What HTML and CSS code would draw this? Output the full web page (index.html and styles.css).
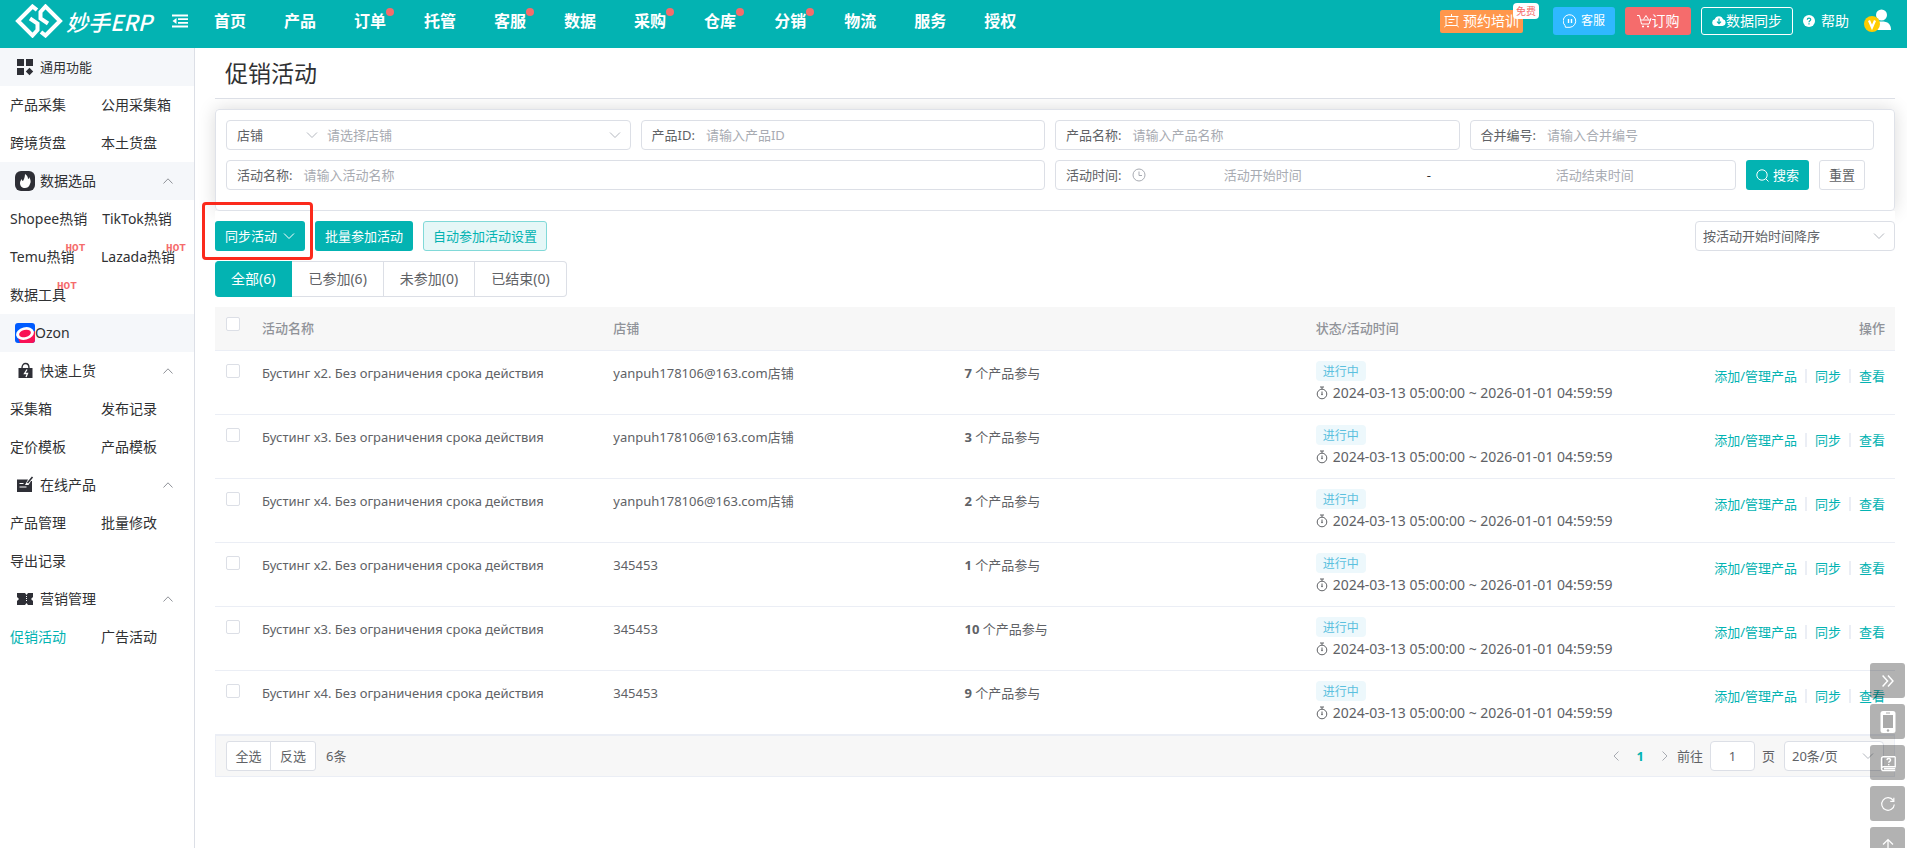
FILE: index.html
```html
<!DOCTYPE html>
<html lang="zh-CN">
<head>
<meta charset="utf-8">
<title>促销活动 - 妙手ERP</title>
<meta name="viewport" content="width=device-width, initial-scale=1">
<link rel="stylesheet" href="styles.css">
</head>
<body>
<svg class="defs" aria-hidden="true">
  <symbol id="down" viewBox="0 0 12 12"><path d="M1 3.500 6 8.500 11 3.500" fill="none" stroke="currentColor"/></symbol>
  <symbol id="up" viewBox="0 0 12 12"><path d="M1.500 8.500 6 3.800 10.500 8.500" fill="none" stroke="currentColor"/></symbol>
  <symbol id="timer" viewBox="0 0 12 14"><circle cx="6" cy="8" r="4.800" fill="none" stroke="currentColor"/><path d="M4 1h4M6 1v2M6 5.500v3" fill="none" stroke="currentColor"/><circle cx="6" cy="8.500" r=".8" fill="currentColor"/></symbol>
</svg>

<header class="topbar">
  <a class="brand" href="#">
    <svg class="brand-mark" viewBox="0 0 48 34" aria-hidden="true"><g fill="none" stroke="#fff" stroke-width="4"><path d="M22 6 17.500 2.500 3 17 17.500 31.500 22.500 26V19.500L15 14.500"/><path d="M26 28 30.500 31.500 45 17 30.500 2.500 25.500 8V14.500L33 19.500"/></g></svg>
    <span class="brand-name">妙手ERP</span>
  </a>
  <button class="fold" aria-label="收起菜单"><svg width="16" height="14" viewBox="0 0 16 14"><path d="M0 1.500h16M6 5.200h10M6 8.800h10M0 12.500h16" stroke="#fff" stroke-width="1.800"/><path d="M4.500 4v6L0.500 7z" fill="#fff"/></svg></button>
  <nav class="mainnav">
    <a href="#">首页</a><a href="#">产品</a><a class="dot" href="#">订单</a><a href="#">托管</a><a class="dot" href="#">客服</a><a href="#">数据</a><a class="dot" href="#">采购</a><a class="dot" href="#">仓库</a><a class="dot" href="#">分销</a><a href="#">物流</a><a href="#">服务</a><a href="#">授权</a>
  </nav>
  <div class="tools">
    <a class="train" href="#"><svg width="15" height="14" viewBox="0 0 15 14" fill="none" stroke="#fff"><path d="M.5 2.500h14M2 2.500v9.500M13 2.500v9.500M7.500 0v2.500M0 13.500l2-2h11l2 2M4.500 5.500h6M4.500 8.500h4"/></svg>预约培训<span class="free">免费</span></a>
    <button class="tool service"><svg width="14" height="14" viewBox="0 0 14 14" fill="none" stroke="#fff"><path d="M2 11.500A6.300 6.300 0 1 1 7 13.300H2.500z"/><path d="M5.500 5v4M8.500 5v4" stroke-width="1.400"/></svg><span>客服</span></button>
    <button class="tool order"><svg width="15" height="14" viewBox="0 0 15 14" fill="none" stroke="#fff"><path d="M0 1.500h2.500l2 8.500h7.500l2-6M4 6h10M6.500 5.500l2.500-4 2.500 4"/><path d="M5 12.500h2M10 12.500h2" stroke-width="1.600"/></svg>订购</button>
    <button class="tool sync"><svg width="14" height="12" viewBox="0 0 14 12"><path d="M3.500 11a3.400 3.400 0 0 1-.7-6.700A4.300 4.300 0 0 1 11 4.300 3.400 3.400 0 0 1 10.500 11z" fill="#fff"/><path d="M7 3.500v5M5 6.700l2 2 2-2" fill="none" stroke="#03b3b2" stroke-width="1.200"/></svg>数据同步</button>
    <a class="help" href="#"><svg width="12" height="12" viewBox="0 0 12 12"><circle cx="6" cy="6" r="6" fill="#fff"/><path d="M4.300 4.800C4.300 2.500 7.800 2.600 7.700 4.600 7.600 5.900 6 5.800 6 7.300M6 8.300v1.200" fill="none" stroke="#03b3b2" stroke-width="1.200"/></svg>帮助</a>
    <button class="avatar" aria-label="账户"><svg width="28" height="24" viewBox="0 0 28 24"><circle cx="17.500" cy="6" r="5.500" fill="#fff"/><path d="M8 21c0-6 3-8.500 9.500-8.500S27 15 27 21z" fill="#fff"/><circle cx="8" cy="15" r="8" fill="#fc0"/><path d="M5 11.500l3 7 3-7" fill="none" stroke="#fff" stroke-width="2.200"/></svg></button>
  </div>
</header>

<div class="layout">
  <aside class="sidebar">
    <h2 class="group shaded small"><svg width="20" height="20" viewBox="0 0 20 20" fill="#2e2f36"><path d="M2 2h7v7H2zM11 2h7v7h-7zM2 11h7v7H2zM14.500 10.800l3.700 3.700-3.700 3.700-3.700-3.700z"/></svg><span>通用功能</span></h2>
    <ul><li><a href="#">产品采集</a></li><li><a href="#">公用采集箱</a></li><li><a href="#">跨境货盘</a></li><li><a href="#">本土货盘</a></li></ul>
    <h2 class="group shaded"><svg width="20" height="20" viewBox="0 0 20 20"><rect width="20" height="20" rx="6" fill="#2e2f36"/><path d="M10 3c3 2 3 4 3 5 1 0 1-1 1-2 2 3 2 5 1 7-1 3-3 4-5 4-3 0-5-2-5-5 0-2 1-3 2-4 0 1 0 2 1 2 1-2 2-4 2-7z" fill="#fff"/></svg><span>数据选品</span><svg class="caret"><use href="#up"/></svg></h2>
    <ul><li><a href="#">Shopee热销</a></li><li><a href="#">TikTok热销</a></li><li><a href="#">Temu热销<b class="hot">HOT</b></a></li><li><a href="#">Lazada热销<b class="hot">HOT</b></a></li><li><a href="#">数据工具<b class="hot">HOT</b></a></li></ul>
    <h2 class="group shaded flush"><svg width="20" height="20" viewBox="0 0 20 20"><rect width="20" height="20" rx="3" fill="#005bff"/><path d="M20 8v9a3 3 0 0 1-3 3H5l-2-5z" fill="#f91155"/><ellipse cx="10" cy="10.500" rx="9" ry="6.200" transform="rotate(-14 10 10.500)" fill="#fff"/><ellipse cx="10" cy="10.500" rx="6" ry="3.600" transform="rotate(-14 10 10.500)" fill="#f91155"/></svg><span>Ozon</span></h2>
    <h2 class="group"><svg width="20" height="20" viewBox="0 0 20 20"><path d="M3.500 7h14v10h-14z" fill="#2e2f36"/><path d="M7 7c0-6 7-6 7 0" fill="none" stroke="#2e2f36" stroke-width="1.400"/><path d="M12 8.500 9.500 12.500h3L11 16" fill="none" stroke="#fff" stroke-width="1.300"/></svg><span>快速上货</span><svg class="caret"><use href="#up"/></svg></h2>
    <ul><li><a href="#">采集箱</a></li><li><a href="#">发布记录</a></li><li><a href="#">定价模板</a></li><li><a href="#">产品模板</a></li></ul>
    <h2 class="group"><svg width="20" height="20" viewBox="0 0 20 20"><path d="M2 4.500h11L10 10h3.500l2.500-4h1v11H2z" fill="#2e2f36"/><path d="M4.500 8.500h4M4.500 12h7" stroke="#fff"/><path d="M17.500 2l-5 6" stroke="#2e2f36" stroke-width="1.600"/></svg><span>在线产品</span><svg class="caret"><use href="#up"/></svg></h2>
    <ul><li><a href="#">产品管理</a></li><li><a href="#">批量修改</a></li><li><a href="#">导出记录</a></li></ul>
    <h2 class="group"><svg width="20" height="20" viewBox="0 0 20 20"><path d="M2 4h8l1.500 2L13 4h5v4l-2 2 2 2v4h-5l-1.500-2L10 16H2v-4l2-2-2-2z" fill="#2e2f36"/><path d="M11.500 7v6" stroke="#fff" stroke-dasharray="1 1"/></svg><span>营销管理</span><svg class="caret"><use href="#up"/></svg></h2>
    <ul><li><a class="active" href="#">促销活动</a></li><li><a href="#">广告活动</a></li></ul>
  </aside>

  <main class="content">
    <h1>促销活动</h1>

    <form class="filters">
      <div class="field"><span class="pick kind"><select aria-label="筛选类型"><option>店铺</option></select><svg><use href="#down"/></svg></span><span class="pick grow"><select class="empty" aria-label="店铺"><option>请选择店铺</option></select><svg><use href="#down"/></svg></span></div>
      <label class="field">产品ID:<input type="text" placeholder="请输入产品ID"></label>
      <label class="field">产品名称:<input type="text" placeholder="请输入产品名称"></label>
      <label class="field">合并编号:<input type="text" placeholder="请输入合并编号"></label>
      <label class="field wide">活动名称:<input type="text" placeholder="请输入活动名称"></label>
      <div class="when">
        <div class="field range"><label for="from">活动时间:</label><svg class="clock" viewBox="0 0 14 14"><circle cx="7" cy="7" r="6" fill="none" stroke="currentColor"/><path d="M7 3.500v4h3" fill="none" stroke="currentColor"/></svg><input id="from" type="text" placeholder="活动开始时间"><span class="dash">-</span><input type="text" aria-label="活动结束时间" placeholder="活动结束时间"></div>
        <button class="btn primary" type="button"><svg width="13" height="13" viewBox="0 0 13 13" fill="none" stroke="#fff"><circle cx="6" cy="6" r="5.200"/><path d="M9.800 9.800l2.700 2.700"/></svg>搜索</button>
        <button class="btn plain" type="reset">重置</button>
      </div>
    </form>

    <div class="toolbar">
      <span class="marked"><button class="btn primary">同步活动<svg width="12" height="12"><use href="#down"/></svg></button></span>
      <button class="btn primary">批量参加活动</button>
      <button class="btn soft">自动参加活动设置</button>
      <span class="pick sort"><select aria-label="排序"><option>按活动开始时间降序</option></select><svg><use href="#down"/></svg></span>
    </div>

    <div class="tabs">
      <button class="on">全部(6)</button><button>已参加(6)</button><button>未参加(0)</button><button>已结束(0)</button>
    </div>

    <table class="list">
      <colgroup><col class="c-check"><col><col><col><col><col class="c-act"></colgroup>
      <thead><tr><th><input type="checkbox" aria-label="全选"></th><th>活动名称</th><th>店铺</th><th></th><th>状态/活动时间</th><th class="right">操作</th></tr></thead>
      <tbody>
        <tr><td><input type="checkbox" aria-label="选择"></td><td>Бустинг x2. Без ограничения срока действия</td><td>yanpuh178106@163.com店铺</td><td><b>7</b> 个产品参与</td><td class="state"><span class="tag">进行中</span><div><svg><use href="#timer"/></svg>2024-03-13 05:00:00 ~ 2026-01-01 04:59:59</div></td><td class="acts"><a href="#">添加/管理产品</a><a href="#">同步</a><a href="#">查看</a></td></tr>
        <tr><td><input type="checkbox" aria-label="选择"></td><td>Бустинг x3. Без ограничения срока действия</td><td>yanpuh178106@163.com店铺</td><td><b>3</b> 个产品参与</td><td class="state"><span class="tag">进行中</span><div><svg><use href="#timer"/></svg>2024-03-13 05:00:00 ~ 2026-01-01 04:59:59</div></td><td class="acts"><a href="#">添加/管理产品</a><a href="#">同步</a><a href="#">查看</a></td></tr>
        <tr><td><input type="checkbox" aria-label="选择"></td><td>Бустинг x4. Без ограничения срока действия</td><td>yanpuh178106@163.com店铺</td><td><b>2</b> 个产品参与</td><td class="state"><span class="tag">进行中</span><div><svg><use href="#timer"/></svg>2024-03-13 05:00:00 ~ 2026-01-01 04:59:59</div></td><td class="acts"><a href="#">添加/管理产品</a><a href="#">同步</a><a href="#">查看</a></td></tr>
        <tr><td><input type="checkbox" aria-label="选择"></td><td>Бустинг x2. Без ограничения срока действия</td><td>345453</td><td><b>1</b> 个产品参与</td><td class="state"><span class="tag">进行中</span><div><svg><use href="#timer"/></svg>2024-03-13 05:00:00 ~ 2026-01-01 04:59:59</div></td><td class="acts"><a href="#">添加/管理产品</a><a href="#">同步</a><a href="#">查看</a></td></tr>
        <tr><td><input type="checkbox" aria-label="选择"></td><td>Бустинг x3. Без ограничения срока действия</td><td>345453</td><td><b>10</b> 个产品参与</td><td class="state"><span class="tag">进行中</span><div><svg><use href="#timer"/></svg>2024-03-13 05:00:00 ~ 2026-01-01 04:59:59</div></td><td class="acts"><a href="#">添加/管理产品</a><a href="#">同步</a><a href="#">查看</a></td></tr>
        <tr><td><input type="checkbox" aria-label="选择"></td><td>Бустинг x4. Без ограничения срока действия</td><td>345453</td><td><b>9</b> 个产品参与</td><td class="state"><span class="tag">进行中</span><div><svg><use href="#timer"/></svg>2024-03-13 05:00:00 ~ 2026-01-01 04:59:59</div></td><td class="acts"><a href="#">添加/管理产品</a><a href="#">同步</a><a href="#">查看</a></td></tr>
      </tbody>
    </table>

    <footer class="pager">
      <div class="pair"><button>全选</button><button>反选</button></div>
      <span class="total">6条</span>
      <button class="step" aria-label="上一页"><svg width="8" height="12" viewBox="0 0 8 12"><path d="M6.500 1.500 2 6l4.500 4.500" fill="none" stroke="currentColor"/></svg></button>
      <b class="page">1</b>
      <button class="step" aria-label="下一页"><svg width="8" height="12" viewBox="0 0 8 12"><path d="M1.500 1.500 6 6l-4.500 4.500" fill="none" stroke="currentColor"/></svg></button>
      <label class="jump">前往<input type="text" value="1">页</label>
      <span class="pick size"><select aria-label="每页条数"><option>20条/页</option></select><svg><use href="#down"/></svg></span>
    </footer>
  </main>
</div>

<div class="dock">
  <button aria-label="收起"><svg viewBox="0 0 20 20"><path d="M4 4l5.500 6L4 16M10 4l5.500 6-5.500 6" fill="none" stroke="#fff" stroke-width="1.600"/></svg></button>
  <button aria-label="手机版"><svg class="tall" viewBox="0 0 16 22"><rect x=".5" width="15" height="22" rx="2.500" fill="#fff"/><path d="M3 4h10v13H3z" fill="#aaa"/><circle cx="8" cy="19.500" r="1.200" fill="#aaa"/><path d="M6 2h4" stroke="#aaa"/></svg></button>
  <button aria-label="帮助手册"><svg viewBox="0 0 20 20" fill="none" stroke="#fff" stroke-width="1.500"><path d="M18 3H5a2.200 2.200 0 0 0-2.200 2.200V16A2.200 2.200 0 0 0 5 18.500h13M3 16a2 2 0 0 1 2-1.800h13V3M5.500 16.400H18"/><path d="M8.800 6.800c.2-2.600 4.400-2.200 4 .2-.3 1.300-2 1.300-2 2.800M10.800 11v1.600"/></svg></button>
  <button aria-label="刷新"><svg viewBox="0 0 20 20" fill="none" stroke="#fff" stroke-width="1.300"><path d="M15.800 6A7 7 0 1 0 17 10.500M16.500 3v4h-4"/></svg></button>
  <button aria-label="回到顶部"><svg viewBox="0 0 20 20" fill="none" stroke="#fff" stroke-width="1.400"><path d="M10 18V4M4.500 9.500 10 4l5.500 5.500"/></svg></button>
</div>
</body>
</html>
```
FILE: styles.css
```css
* { box-sizing: border-box; }
body {
  margin: 0;
  min-height: 100vh;
  display: flex;
  flex-direction: column;
  font: 13px/20px "Noto Sans", "Noto Sans CJK SC", sans-serif;
  color: #606266;
  background: #fff;
}
button, input, select { font: inherit; color: inherit; margin: 0; }
button { padding: 0; border: 0; background: none; cursor: pointer; white-space: nowrap; }
a { color: inherit; text-decoration: none; }
ul { margin: 0; padding: 0; list-style: none; }
svg { display: block; flex: none; }
.defs { position: absolute; width: 0; height: 0; }

/* top bar */
.topbar {
  display: flex;
  align-items: center;
  height: 48px;
  padding: 0 15px 6px 15px;
  background: #03b3b2;
  color: #fff;
}
.brand { display: flex; align-items: center; gap: 3px; width: 157px; }
.brand-mark { width: 48px; height: 34px; }
.brand-name { font: italic 500 22px/34px "Noto Sans CJK SC", sans-serif; white-space: nowrap; }
.mainnav { display: flex; gap: 38px; margin-left: 26px; font-size: 16px; font-weight: 700; white-space: nowrap; }
.mainnav a { position: relative; }
.dot::after {
  content: "";
  position: absolute;
  top: -3px;
  left: 100%;
  width: 8px;
  height: 8px;
  border-radius: 50%;
  background: #f56c6c;
}
.tools { display: flex; align-items: center; gap: 10px; margin-left: auto; font-size: 14px; white-space: nowrap; }
.train {
  position: relative;
  display: flex;
  align-items: center;
  gap: 4px;
  height: 23px;
  margin-right: 20px;
  padding: 0 4px;
  border-radius: 2px;
  background: #ff974c;
}
.free {
  position: absolute;
  top: -7px;
  right: -16px;
  padding: 0 3px;
  border-radius: 4px;
  background: #fff;
  color: #f56c6c;
  font-size: 10px;
  line-height: 16px;
}
.tool { display: flex; align-items: center; justify-content: center; height: 28px; border-radius: 3px; }
.service { gap: 4px; width: 62px; background: #2fb8ff; font-size: 12px; }
.order { width: 66px; background: #f56c6c; }
.sync { width: 92px; border: 1px solid #fff; }
.help { display: flex; align-items: center; gap: 6px; }
.avatar { margin-left: 5px; }

/* sidebar */
.layout { display: flex; flex: 1; }
.sidebar { flex: none; width: 195px; border-right: 1px solid #dcdfe6; color: #303133; font-size: 14px; }
.group { display: flex; align-items: center; gap: 5px; height: 38px; margin: 0; padding: 0 20px 0 15px; font-size: 14px; font-weight: 400; }
.small { font-size: 13px; }
.flush { gap: 0; }
.shaded { background: #f5f7fa; }
.caret { width: 12px; height: 12px; margin-left: auto; color: #909399; }
.sidebar ul { display: flex; flex-wrap: wrap; padding-left: 10px; }
.sidebar li { min-width: 91px; line-height: 38px; white-space: nowrap; }
.sidebar li:nth-child(odd) { padding-right: 15px; }
.sidebar li a { position: relative; display: inline-block; }
.active { color: #03b3b2; }
.hot {
  position: absolute;
  top: 4px;
  left: calc(100% - 9px);
  color: #f56c6c;
  font: 700 11px/12px "Liberation Mono", monospace;
}

/* content */
.content { flex: 1; min-width: 0; padding: 0 12px 0 20px; }
h1 {
  position: relative;
  z-index: 1;
  margin: 0;
  padding: 8px 10px;
  border-bottom: 1px solid #dcdfe6;
  background: #fff;
  color: #303133;
  font-size: 23px;
  font-weight: 400;
  line-height: 34px;
}
.filters {
  display: grid;
  grid-template-columns: repeat(4, 1fr);
  gap: 10px;
  margin-top: 10px;
  padding: 10px 20px 20px 10px;
  border: 1px solid #dfe2e9;
  border-radius: 4px;
  box-shadow: 0 0 18px rgba(0, 0, 0, .15);
}
.field {
  display: flex;
  align-items: center;
  min-width: 0;
  height: 30px;
  padding-left: 10px;
  border: 1px solid #dcdfe6;
  border-radius: 4px;
  white-space: nowrap;
}
.field input { flex: 1; min-width: 0; height: 28px; padding: 0 11px; border: 0; outline: 0; background: none; }
::placeholder { color: #a8abb2; opacity: 1; }
.wide, .when { grid-column: span 2; }
.when { display: flex; gap: 10px; padding-right: 9px; }
.range { flex: 1; padding-right: 24px; }
.range input { flex: 7 1 0; padding: 0; text-align: center; }
.clock { width: 14px; height: 14px; margin-left: 11px; color: #a8abb2; }
.dash { flex: 3 1 0; color: #303133; text-align: center; }

.pick { position: relative; display: flex; align-items: center; }
.pick select { width: 100%; height: 28px; padding: 0; border: 0; outline: 0; background: none; appearance: none; }
.pick svg { position: absolute; right: 9px; width: 12px; height: 12px; color: #b4b8bf; pointer-events: none; }
.pick .empty { color: #a8abb2; }
.kind { width: 90px; }
.grow { flex: 1; }

.btn { display: flex; align-items: center; gap: 4px; height: 30px; padding: 0 9px; border: 1px solid transparent; border-radius: 3px; }
.primary { background: #03b3b2; color: #fff; }
.plain { border-color: #dcdfe6; }
.soft { border-color: #81d9d8; background: #e5f7f7; color: #03b3b2; }

.toolbar { position: relative; display: flex; gap: 10px; padding: 10px 0; background: #fff; }
.toolbar .btn svg { margin-left: 2px; }
.marked { position: relative; }
.marked::after {
  content: "";
  position: absolute;
  inset: -19px -8px -9px -13px;
  border: 3px solid #fb2a1c;
  border-radius: 4px;
  pointer-events: none;
}
.sort { width: 200px; margin-left: auto; border: 1px solid #dcdfe6; border-radius: 4px; padding-left: 7px; }

.tabs { display: flex; }
.tabs button { height: 36px; padding: 0 16px; border: 1px solid #dcdfe6; border-left-width: 0; font-size: 14px; }
.tabs button:last-child { border-radius: 0 4px 4px 0; }
.tabs .on { border-color: #03b3b2; border-radius: 4px 0 0 4px; background: #03b3b2; color: #fff; }

.list { width: 100%; margin-top: 10px; border-collapse: separate; border-spacing: 0; table-layout: fixed; }
.c-check { width: 37px; }
.c-act { width: 238px; }
.list th, .list td { padding: 12px 10px 9px; border-bottom: 1px solid #ebeef5; text-align: left; vertical-align: top; white-space: nowrap; }
.list th { height: 44px; padding-top: 11px; background: #f7f7f7; color: #909399; font-weight: 500; }
.list .state { padding-top: 10px; }
.list .state div { display: flex; align-items: center; gap: 5px; font-size: 14px; line-height: 24px; }
.state svg { width: 12px; height: 14px; }
.tag { display: block; width: 50px; height: 20px; border-radius: 4px; background: #edf8fc; color: #5bc0de; font-size: 12px; line-height: 22px; text-align: center; }
.list .right, .list .acts { text-align: right; }
.list .acts { padding-top: 15px; color: #03b3b2; }
.acts a + a::before { content: ""; display: inline-block; width: 2px; height: 14px; margin: 0 8px; background: #ebeef5; vertical-align: -2px; }
input[type="checkbox"] { display: block; width: 14px; height: 14px; margin: 1px; appearance: none; border: 1px solid #dcdfe6; border-radius: 2px; background: #fff; }
th input[type="checkbox"] { margin-top: -1px; }

.pager { display: flex; align-items: center; height: 43px; margin-top: -1px; padding: 0 10px; border: 1px solid #ebeef5; border-top-width: 2px; background: #f7f7f7; }
.pair { display: flex; }
.pair button { width: 45px; height: 30px; border: 1px solid #dcdfe6; border-radius: 3px 0 0 3px; background: #fff; }
.pair button + button { width: 46px; margin-left: -1px; border-radius: 0 3px 3px 0; }
.total { flex: 1; margin-left: 10px; }
.step { width: 8px; color: #a8abb2; }
.page { margin: 0 17px; color: #03b3b2; }
.jump { display: flex; align-items: center; gap: 7px; margin: 0 9px 0 8px; }
.jump input { width: 45px; height: 30px; padding: 0; border: 1px solid #dcdfe6; border-radius: 4px; background: #fff; text-align: center; }
.size { width: 100px; padding-left: 7px; border: 1px solid #dcdfe6; border-radius: 4px; background: #fff; }

/* floating shortcuts; the last one runs past the window edge */
.dock { position: fixed; right: 2px; bottom: -14px; z-index: 5; display: flex; flex-direction: column; gap: 6px; }
.dock button { display: flex; align-items: center; justify-content: center; width: 35px; height: 35px; border-radius: 3px; background: rgba(0, 0, 0, .3); }
.dock svg { width: 18px; height: 18px; }
.dock .tall { width: 16px; height: 22px; }
```
